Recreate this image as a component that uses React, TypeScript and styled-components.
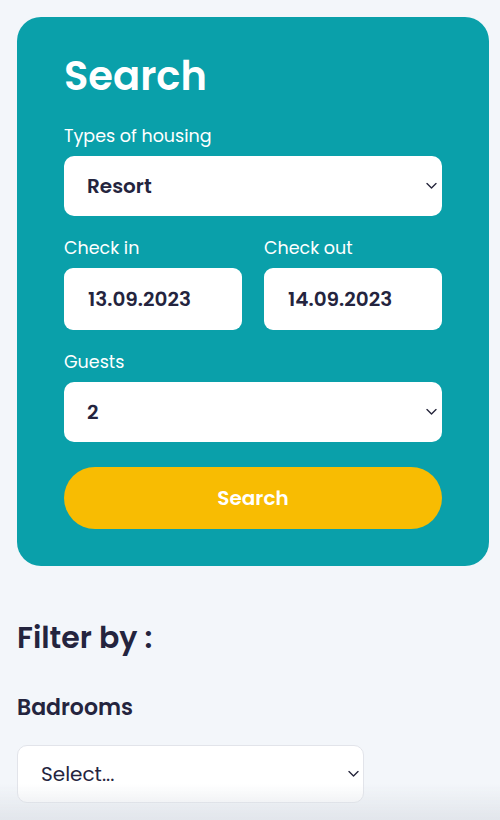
import styled, { createGlobalStyle } from "styled-components"

const GlobalStyle = createGlobalStyle`
  html, body {
    margin: 0;
    padding: 0;
    background: #f3f6fa;
    font-family: "Poppins", "Inter", "Open Sans", sans-serif;
    color: #24243e;
  }
  * { box-sizing: border-box; }
`

const Chevron = () => (
  <svg width="11" height="7" viewBox="0 0 11 7" fill="none">
    <path d="M1 1l4.5 4.5L10 1" stroke="#26263c" strokeWidth="1.4" strokeLinecap="round" strokeLinejoin="round" />
  </svg>
)

function SelectField({ value, placeholder, outlined }: { value?: string; placeholder?: string; outlined?: boolean }) {
  return (
    <SelectWrap $outlined={outlined}>
      <SelectBox $outlined={outlined} defaultValue={value ?? ""}>
        {placeholder && <option value="">{placeholder}</option>}
        {value && <option value={value}>{value}</option>}
      </SelectBox>
      <Arrow>
        <Chevron />
      </Arrow>
    </SelectWrap>
  )
}

export default function App() {
  return (
    <>
      <GlobalStyle />
      <Page>
        <SearchCard>
          <Title>Search</Title>

          <Field>
            <Label>Types of housing</Label>
            <SelectField value="Resort" />
          </Field>

          <DateRow>
            <Field>
              <Label>Check in</Label>
              <DateInput defaultValue="13.09.2023" />
            </Field>
            <Field>
              <Label>Check out</Label>
              <DateInput defaultValue="14.09.2023" />
            </Field>
          </DateRow>

          <Field>
            <Label>Guests</Label>
            <SelectField value="2" />
          </Field>

          <SearchButton>Search</SearchButton>
        </SearchCard>

        <Filters>
          <FilterTitle>Filter by :</FilterTitle>
          <FilterLabel>Badrooms</FilterLabel>
          <SelectField placeholder="Select..." outlined />
        </Filters>
      </Page>
      <BottomFade />
    </>
  )
}

const Page = styled.div`
  padding: 17px 11px 20px 17px;
`

const SearchCard = styled.section`
  background: #0aa0aa;
  border-radius: 24px;
  padding: 35px 47px 37px 47px;
  display: flex;
  flex-direction: column;
`

const Title = styled.h1`
  margin: 0 0 24px;
  font-size: 40px;
  line-height: 48px;
  font-weight: 600;
  color: #fff;
`

const Field = styled.div`
  display: flex;
  flex-direction: column;
  margin-bottom: 20px;
`

const Label = styled.label`
  font-size: 17.5px;
  line-height: 24px;
  font-weight: 400;
  color: #fff;
  margin-bottom: 8px;
`

const DateRow = styled.div`
  display: grid;
  grid-template-columns: 1fr 1fr;
  gap: 22px;
`

const SelectWrap = styled.div<{ $outlined?: boolean }>`
  position: relative;
  width: ${(p) => (p.$outlined ? "347px" : "100%")};
`

const SelectBox = styled.select<{ $outlined?: boolean }>`
  appearance: none;
  width: 100%;
  height: ${(p) => (p.$outlined ? "58px" : "60px")};
  border-radius: 10px;
  border: ${(p) => (p.$outlined ? "1px solid #e2e4ea" : "none")};
  background: #fff;
  padding: 0 23px;
  font-family: inherit;
  font-size: 20px;
  font-weight: ${(p) => (p.$outlined ? 400 : 600)};
  color: #24243e;
  outline: none;
`

const Arrow = styled.span`
  position: absolute;
  right: 5px;
  top: 50%;
  transform: translateY(-50%);
  display: flex;
  pointer-events: none;
`

const DateInput = styled.input`
  width: 100%;
  height: 62px;
  border: none;
  border-radius: 9px;
  background: #fff;
  padding: 0 24px;
  font-family: inherit;
  font-size: 20px;
  font-weight: 600;
  color: #24243e;
  outline: none;
`

const SearchButton = styled.button`
  margin-top: 5px;
  height: 62px;
  border: none;
  border-radius: 31px;
  background: #f8bc02;
  color: #fff;
  font-family: inherit;
  font-size: 20px;
  font-weight: 600;
`

const Filters = styled.div`
  padding-top: 54px;
`

const FilterTitle = styled.h2`
  margin: 0 0 38px;
  font-size: 30px;
  line-height: 36px;
  font-weight: 600;
  color: #24243e;
`

const FilterLabel = styled.h3`
  margin: 0 0 23px;
  font-size: 22px;
  line-height: 28px;
  font-weight: 600;
  color: #24243e;
`

const BottomFade = styled.div`
  position: fixed;
  left: 0;
  right: 0;
  bottom: 0;
  height: 36px;
  pointer-events: none;
  background: linear-gradient(to bottom, rgba(220, 224, 230, 0), rgba(220, 224, 230, 0.75));
`
